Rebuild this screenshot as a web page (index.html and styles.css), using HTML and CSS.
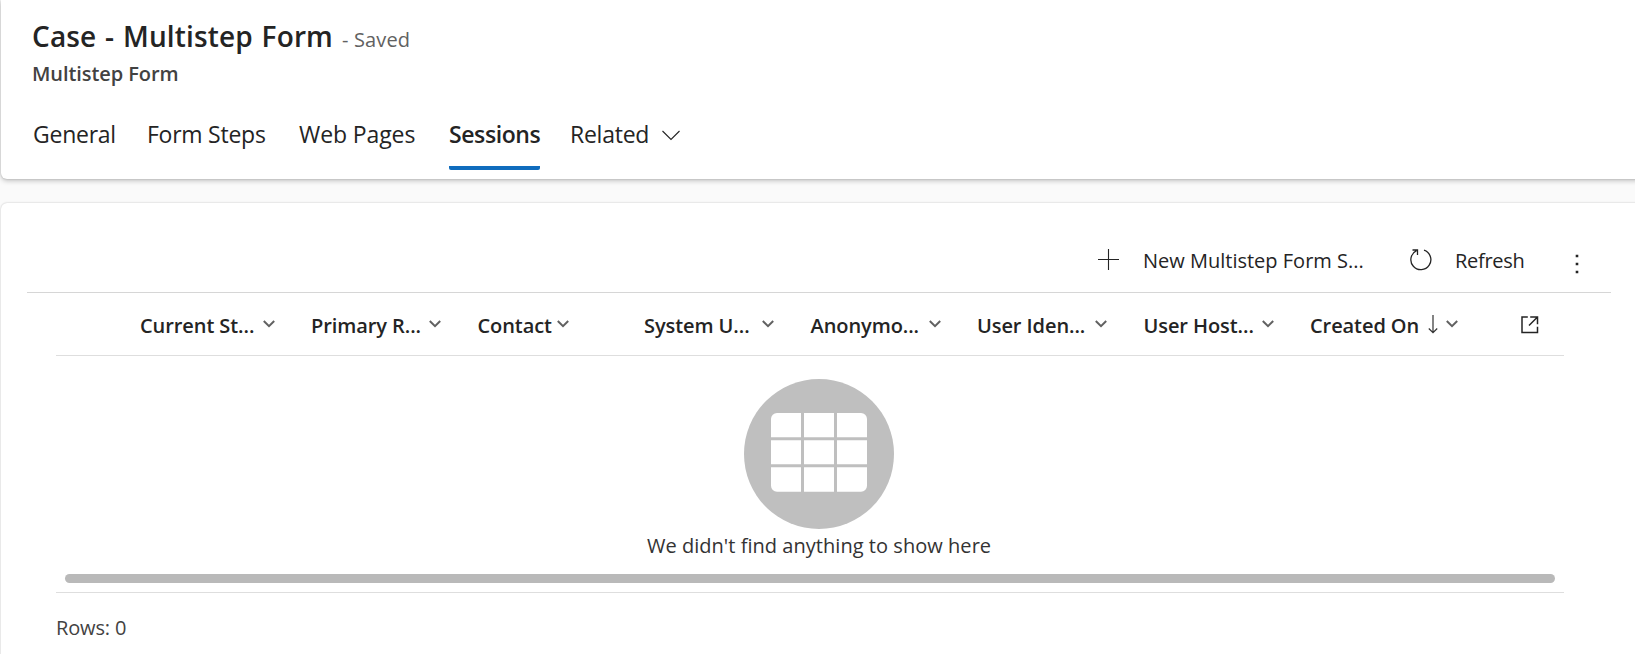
FILE: index.html
```html
<!DOCTYPE html>
<html lang="en">
<head>
<meta charset="utf-8">
<title>Case - Multistep Form</title>
<link rel="stylesheet" href="styles.css">
</head>
<body>
<svg class="defs" width="0" height="0">
  <symbol id="chevron" viewBox="0 0 12 8"><path d="M.8 1 6 6.200 11.200 1" fill="none" stroke="#616161" stroke-width="2"/></symbol>
</svg>
<header class="form-header">
  <div class="title-row">
    <h1 class="title">Case - Multistep Form</h1>
    <span class="status">- Saved</span>
  </div>
  <div class="entity">Multistep Form</div>
  <nav class="tabs">
    <span class="tab general">General</span>
    <span class="tab steps">Form Steps</span>
    <span class="tab pages">Web Pages</span>
    <span class="tab active">Sessions</span>
    <span class="tab related">Related
      <svg width="18" height="11" viewBox="0 0 18 11"><path d="M.5 1 9 9.500 17.500 1" fill="none" stroke="#242424" stroke-width="1.1"/></svg>
    </span>
  </nav>
</header>
<main class="panel">
  <div class="toolbar">
    <svg width="22" height="22" viewBox="0 0 22 22"><path d="M0 10.500H21M10.500 0V21" fill="none" stroke="#242424" stroke-width="1.1"/></svg>
    <span class="command new">New Multistep Form S...</span>
    <svg width="22" height="22" viewBox="0 0 22 22"><path d="M14 1.200A10 10 0 1 1 6.500 1.700M2.500 1H7.500V6" fill="none" stroke="#242424" stroke-width="1.300"/></svg>
    <span class="command refresh">Refresh</span>
    <svg class="more" width="4" height="20" viewBox="0 0 4 20"><path d="M.7 .7h2.600v2.600H.7zM.7 8.700h2.600v2.600H.7zM.7 16.700h2.600v2.600H.7z" fill="#242424"/></svg>
  </div>
  <section class="grid">
    <div class="columns">
      <div class="column first"><span class="name">Current St...</span><svg class="chevron"><use href="#chevron"/></svg></div>
      <div class="column"><span class="name">Primary R...</span><svg class="chevron"><use href="#chevron"/></svg></div>
      <div class="column fit"><span class="name">Contact</span><svg class="chevron"><use href="#chevron"/></svg></div>
      <div class="column"><span class="name">System U...</span><svg class="chevron"><use href="#chevron"/></svg></div>
      <div class="column"><span class="name">Anonymo...</span><svg class="chevron"><use href="#chevron"/></svg></div>
      <div class="column"><span class="name">User Iden...</span><svg class="chevron"><use href="#chevron"/></svg></div>
      <div class="column"><span class="name">User Host...</span><svg class="chevron"><use href="#chevron"/></svg></div>
      <div class="column sorted"><span class="name">Created On</span><svg class="sort" width="10" height="19" viewBox="0 0 10 19"><path d="M5 0V18M.8 13.500 5 17.700 9.200 13.500" fill="none" stroke="#333" stroke-width="1.2"/></svg><svg class="chevron"><use href="#chevron"/></svg></div>
      <svg class="popout" width="18" height="18" viewBox="0 0 18 18"><path d="M6.800 1H1V16.500H16.500V10.700M9.200 1H16.500V8.300M16.500 1 8 9.500" fill="none" stroke="#242424" stroke-width="1.500"/></svg>
    </div>
    <div class="empty">
      <svg width="150" height="150" viewBox="0 0 150 150">
        <circle cx="75" cy="75" r="75" fill="#bfbfbf"/>
        <path d="M33 34h24v24.300H27V40a6 6 0 0 1 6-6zM60 34h30v24.300H60zM93 34h24a6 6 0 0 1 6 6v18.300H93zM27 61.300h30v24H27zM60 61.300h30v24H60zM93 61.300h30v24H93zM27 88.300h30v24.500H33a6 6 0 0 1-6-6zM60 88.300h30v24.500H60zM93 88.300h30v18.500a6 6 0 0 1-6 6H93z" fill="#fff"/>
      </svg>
      <p class="message">We didn't find anything to show here</p>
    </div>
    <div class="scrollbar"></div>
  </section>
  <footer class="rows">Rows: 0</footer>
</main>
</body>
</html>
```
FILE: styles.css
```css
* {
  box-sizing: border-box;
}

body {
  margin: 0;
  height: 654px;
  overflow: hidden;
  background: #fafafa;
  color: #242424;
  font: 20px/28px "Open Sans", "Noto Sans", sans-serif;
}

svg {
  display: block;
  flex: none;
}

.defs {
  position: absolute;
}

.form-header {
  height: 179px;
  margin: 0 -8px 0 1px;
  padding: 18px 32px 0 31px;
  border-radius: 0 0 6px 6px;
  background: #fff;
  box-shadow: 0 0 2px rgba(0, 0, 0, .2), 0 2px 5px rgba(0, 0, 0, .22);
}

.title-row {
  display: flex;
  align-items: baseline;
  height: 36px;
}

.title {
  width: 310px;
  margin: 0;
  font-size: 28px;
  font-weight: 600;
  line-height: 36px;
  letter-spacing: .15px;
  word-spacing: 1.3px;
  white-space: nowrap;
}

.status {
  color: #616161;
  letter-spacing: .15px;
}

.entity {
  margin-top: 6px;
  color: #424242;
  font-weight: 600;
  letter-spacing: -.08px;
}

.tabs {
  display: flex;
  margin-top: 30px;
  padding-left: 1px;
  font-size: 23px;
  line-height: 32px;
  letter-spacing: -.25px;
  white-space: nowrap;
}

.tab {
  flex: none;
  height: 52px;
}

.general {
  width: 114px;
}

.steps {
  width: 152px;
}

.pages {
  width: 150px;
  letter-spacing: -.1px;
}

.active {
  width: 91px;
  border-bottom: 4px solid #0f6cbd;
  border-radius: 2px;
  font-weight: 600;
  letter-spacing: -.4px;
}

.related {
  display: flex;
  gap: 13px;
  margin-left: 30px;
}

.related svg {
  margin-top: 12px;
}

.panel {
  height: 460px;
  margin: 24px -8px 0 1px;
  padding: 30px 32px 0 26px;
  border-radius: 6px 6px 0 0;
  background: #fff;
  box-shadow: 0 0 2px rgba(0, 0, 0, .25);
}

.toolbar {
  display: flex;
  align-items: center;
  height: 60px;
  padding: 0 0 6px 1071px;
  border-bottom: 1px solid #d6d6d6;
  white-space: nowrap;
}

.command {
  padding-top: 2px;
}

.new {
  width: 267px;
  margin-left: 23px;
}

.refresh {
  width: 97px;
  margin-left: 23px;
  letter-spacing: -.3px;
}

.more {
  margin: 8px 0 0 23px;
}

.grid {
  margin: 0 47px 0 29px;
  border-bottom: 1px solid #dedede;
}

.columns {
  display: flex;
  height: 63px;
  padding: 19px 0 0 84px;
  border-bottom: 1px solid #dedede;
  font-weight: 600;
  letter-spacing: -.08px;
  white-space: nowrap;
}

.column {
  display: flex;
  width: 166.500px;
}

.column.first {
  width: 171px;
}

.name {
  width: 118px;
}

.first .name {
  width: 123px;
}

.fit .name {
  width: 79px;
}

.chevron {
  width: 12px;
  height: 8px;
  margin-top: 8px;
}

.sorted {
  width: 211px;
}

.sort {
  margin: 3px 8px 0 0;
}

.popout {
  margin-top: 4px;
}

.empty {
  display: flex;
  flex-direction: column;
  align-items: center;
  padding: 23px 0 0 18px;
}

.message {
  margin: 3px 0 0;
  color: #333;
  letter-spacing: .04px;
}

.scrollbar {
  height: 9px;
  margin: 14px 9px 9px;
  border-radius: 5px;
  background: #b9b9b9;
}

.rows {
  margin: 21px 0 0 29px;
  color: #424242;
  letter-spacing: -.15px;
}
```
